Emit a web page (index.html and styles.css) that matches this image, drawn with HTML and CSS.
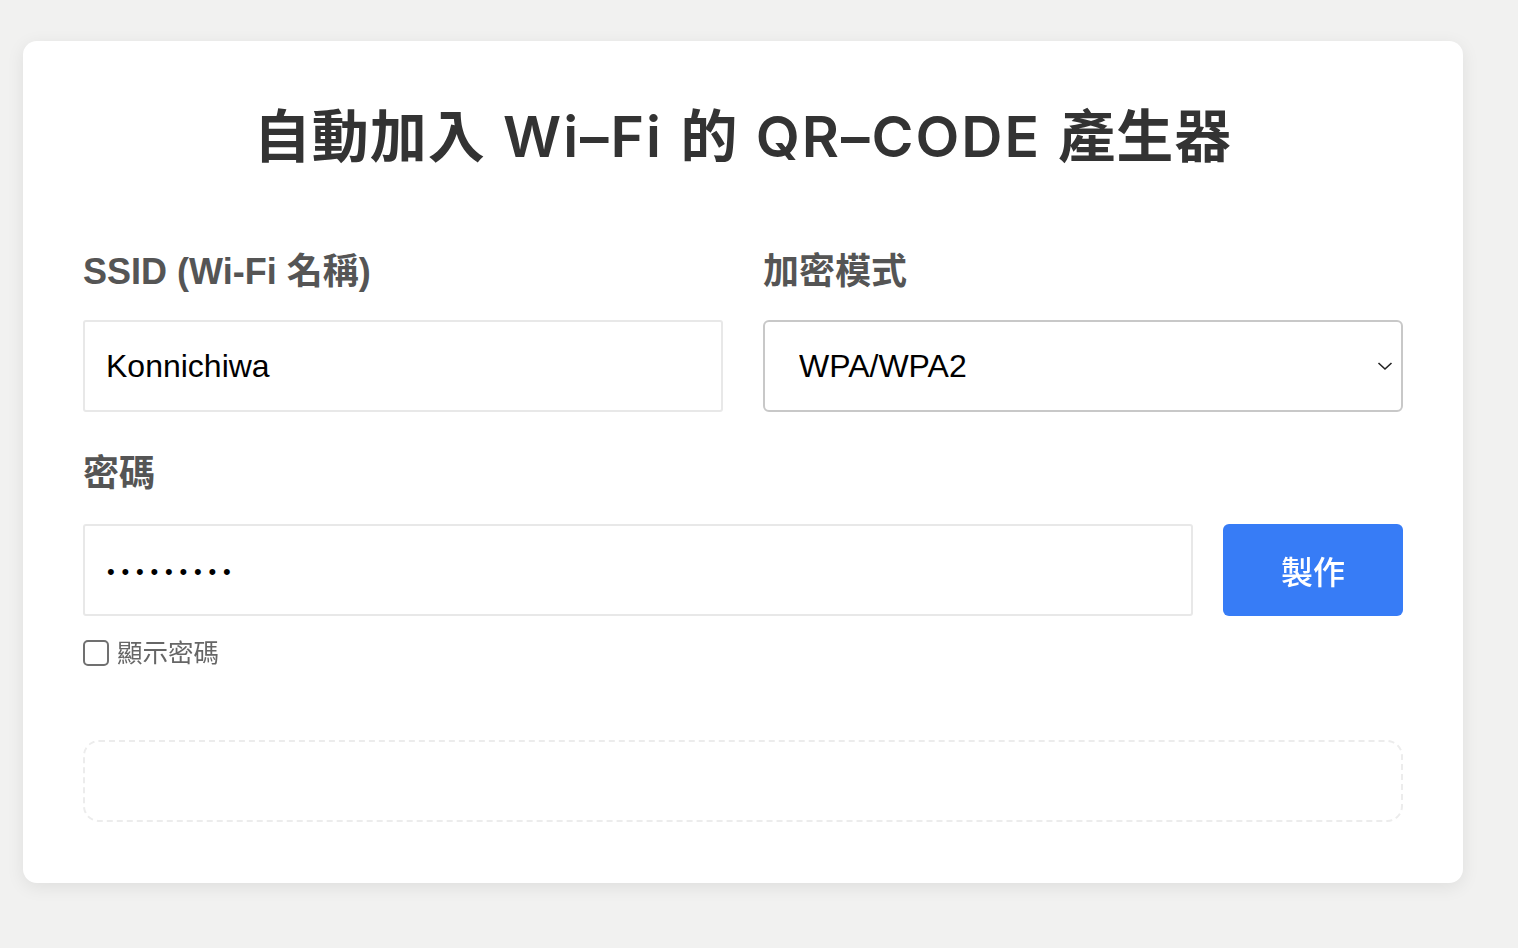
FILE: index.html
```html
<!DOCTYPE html>
<html lang="zh-Hant">
<head>
<meta charset="utf-8">
<title>自動加入 Wi-Fi 的 QR-CODE 產生器</title>
<link rel="stylesheet" href="styles.css">
</head>
<body>
<main class="card">
  <h1 class="title">自動加入 <span class="latin">Wi–Fi</span> 的 <span class="latin">QR–CODE</span> 產生器</h1>
  <div class="row">
    <div class="field">
      <label class="label" for="ssid">SSID (Wi-Fi 名稱)</label>
      <input class="input" id="ssid" type="text" value="Konnichiwa">
    </div>
    <div class="field">
      <label class="label" for="mode">加密模式</label>
      <div class="select-wrap">
        <select class="select" id="mode">
          <option>WPA/WPA2</option>
          <option>WEP</option>
          <option>無</option>
        </select>
        <svg class="chevron" width="16" height="10" viewBox="0 0 16 10"><path d="M1.5 2 L8 8 L14.5 2" fill="none" stroke="#222" stroke-width="1.6"/></svg>
      </div>
    </div>
  </div>
  <div class="field pw-field">
    <label class="label" for="pw">密碼</label>
    <div class="pw-row">
      <input class="input pw-input" id="pw" type="password" value="123456789" autofocus>
      <button class="btn" type="button">製作</button>
    </div>
    <label class="check"><input type="checkbox" class="check-box"><span>顯示密碼</span></label>
  </div>
  <div class="result"></div>
</main>
</body>
</html>
```

FILE: styles.css
```css
html, body {
  margin: 0;
  padding: 0;
}
body {
  background: #f1f1f0;
  font-family: "Liberation Sans", "Noto Sans CJK TC", sans-serif;
  padding: 41px 23px 65px;
}
.card {
  width: 1440px;
  box-sizing: border-box;
  background: #fff;
  border-radius: 14px;
  box-shadow: 0 4px 18px rgba(0, 0, 0, 0.08);
  padding: 58px 60px 61px;
}
.title {
  margin: 0;
  text-align: center;
  font-family: "Inter", "Noto Sans CJK TC", sans-serif;
  font-size: 57px;
  line-height: 76px;
  font-weight: 600;
  letter-spacing: 1px;
  word-spacing: 2px;
  color: #333;
}
.latin {
  letter-spacing: 2px;
}
.row {
  display: grid;
  grid-template-columns: 1fr 1fr;
  gap: 40px;
  margin-top: 75px;
}
.field {
  display: flex;
  flex-direction: column;
}
.label {
  font-size: 36px;
  line-height: 44px;
  font-weight: 700;
  color: #555;
  margin-bottom: 26px;
}
.input, .select {
  box-sizing: border-box;
  height: 92px;
  width: 100%;
  font-family: inherit;
  font-size: 32px;
  color: #000;
  background: #fff;
  margin: 0;
}
.input {
  border: 2px solid #e8e8e8;
  border-radius: 3px;
  padding: 0 21px;
  outline: none;
  caret-color: #000;
}
.select-wrap {
  position: relative;
}
.select {
  appearance: none;
  -webkit-appearance: none;
  border: 2px solid #c8c8c8;
  border-radius: 6px;
  padding: 0 34px;
}
.chevron {
  position: absolute;
  right: 10px;
  top: 41px;
  pointer-events: none;
}
.pw-field {
  margin-top: 40px;
}
.pw-row {
  display: flex;
  gap: 30px;
  margin-top: 2px;
}
.pw-input {
  flex: 1;
  width: auto;
  font-family: "Liberation Sans", sans-serif;
  font-size: 22px;
  letter-spacing: 6.8px;
  padding-left: 22px;
  padding-top: 3px;
}
.btn {
  width: 180px;
  height: 92px;
  border: none;
  border-radius: 6px;
  background: #377cf6;
  color: #fff;
  font-family: inherit;
  font-size: 32px;
  font-weight: 500;
  cursor: pointer;
}
.check {
  display: flex;
  align-items: center;
  gap: 8px;
  margin-top: 21px;
  font-size: 25.5px;
  line-height: 32px;
  color: #666;
}
.check-box {
  appearance: none;
  -webkit-appearance: none;
  margin: 0;
  width: 26px;
  height: 26px;
  box-sizing: border-box;
  border: 2px solid #707070;
  border-radius: 5px;
  background: #fff;
}
.result {
  margin-top: 71px;
  height: 82px;
  box-sizing: border-box;
  border: 2px dashed #ececec;
  border-radius: 16px;
}
```
